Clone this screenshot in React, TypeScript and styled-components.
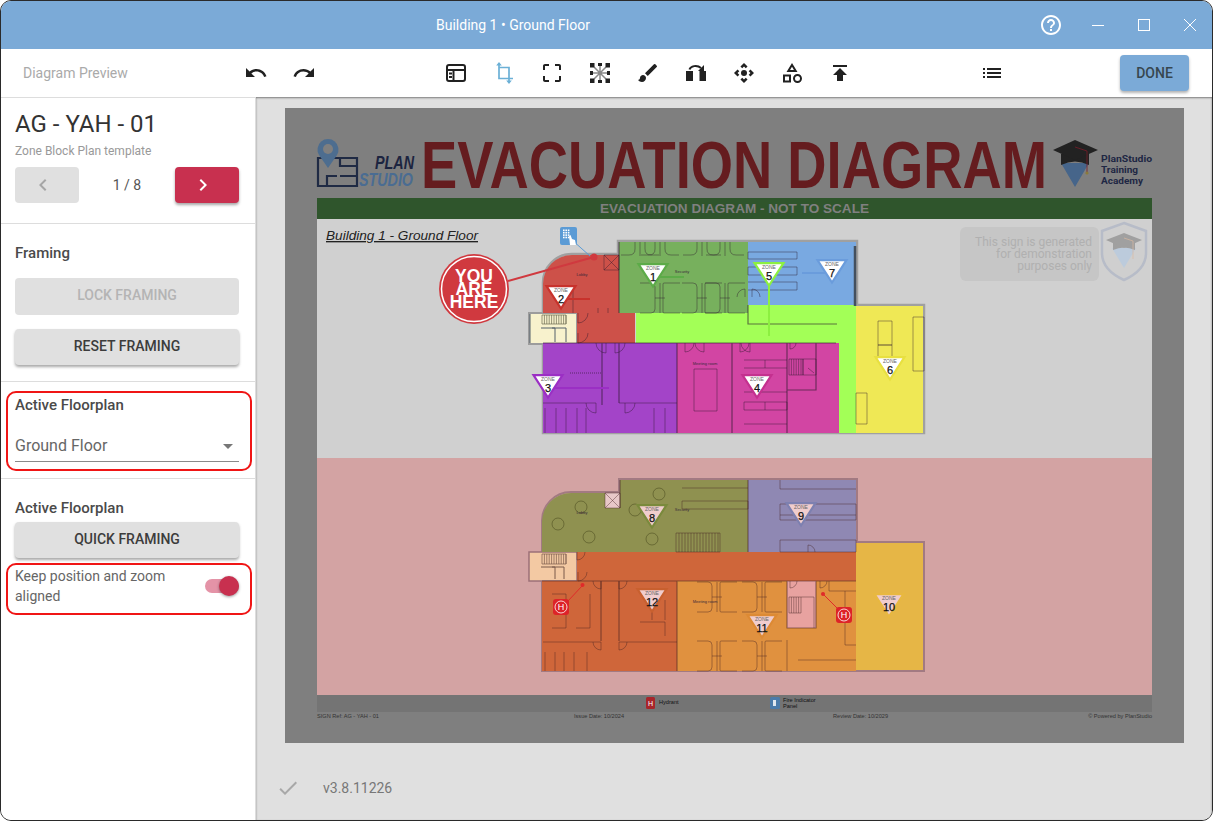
import React from "react";
import styled, { createGlobalStyle } from "styled-components";
import {
  MdUndo,
  MdRedo,
  MdCropFree,
  MdBrush,
  MdControlCamera,
  MdOutlineCategory,
  MdPublish,
  MdList,
  MdHelpOutline,
  MdCheck,
  MdChevronLeft,
  MdChevronRight,
} from "react-icons/md";

const GlobalStyle = createGlobalStyle`
  html, body { margin: 0; padding: 0; background: #fff; }
  * { box-sizing: border-box; }
  body { font-family: Roboto, "Liberation Sans", sans-serif; }
`;

const Win = styled.div`
  width: 1213px;
  height: 821px;
  display: flex;
  flex-direction: column;
  overflow: hidden;
  background: #fff;
  border: 1px solid #2a2a2a;
  border-radius: 11px;
`;

const TitleBar = styled.div`
  height: 48px;
  flex: none;
  display: flex;
  align-items: center;
  padding-left: 435px;
  background: #7baad7;
  color: #fff;
`;

const WinTitle = styled.div`
  font-size: 14px;
  flex: 1;
`;

const WinControl = styled.div`
  width: 46px;
  height: 48px;
  display: flex;
  align-items: center;
  justify-content: center;
  font-size: 24px;
`;

const ToolBar = styled.div`
  height: 48px;
  flex: none;
  display: flex;
  align-items: center;
  gap: 104px;
  background: #fff;
`;

const ToolLabel = styled.div`
  width: 127px;
  margin-left: 22px;
  margin-right: -22px;
  font-size: 14px;
  color: #aaa;
`;

const ToolGroup = styled.div`
  display: flex;
`;

const ToolBtn = styled.div`
  width: 48px;
  height: 48px;
  display: flex;
  align-items: center;
  justify-content: center;
  font-size: 24px;
  color: #212121;
`;

const DoneBtn = styled.div`
  width: 69px;
  height: 36px;
  display: flex;
  align-items: center;
  justify-content: center;
  border-radius: 4px;
  background: #7baad7;
  color: #37474f;
  font-size: 14px;
  font-weight: 500;
  box-shadow: 0 2px 3px rgba(0, 0, 0, 0.3);
`;

const Body = styled.div`
  flex: 1;
  display: flex;
  min-height: 0;
`;

const Sidebar = styled.div`
  width: 255px;
  flex: none;
  border-top: 1px solid #ddd;
  border-right: 1px solid #ddd;
  background: #fff;
`;

const Section = styled.div<{ $top: number; $bottom: number; $last?: boolean }>`
  position: relative;
  padding: ${(p) => p.$top}px 16px ${(p) => p.$bottom}px 14px;
  border-bottom: ${(p) => (p.$last ? "none" : "1px solid #ddd")};
`;

const DocName = styled.div`
  font-size: 24px;
  line-height: 28px;
  color: #333;
`;

const DocSub = styled.div`
  margin-top: 4px;
  font-size: 12px;
  line-height: 18px;
  color: #999;
`;

const Pager = styled.div`
  margin-top: 7px;
  display: flex;
  align-items: center;
  justify-content: space-between;
`;

const PageBtn = styled.div<{ $on?: boolean }>`
  width: 64px;
  height: 36px;
  display: flex;
  align-items: center;
  justify-content: center;
  padding-right: 8px;
  border-radius: 4px;
  font-size: 24px;
  background: ${(p) => (p.$on ? "#c8304f" : "#e0e0e0")};
  color: ${(p) => (p.$on ? "#fff" : "#a6a6a6")};
  box-shadow: ${(p) => (p.$on ? "0 2px 3px rgba(0,0,0,.35)" : "none")};
`;

const PageText = styled.div`
  font-size: 14px;
  color: #555;
`;

const Heading = styled.div`
  font-size: 15px;
  line-height: 20px;
  font-weight: 500;
  color: #4a4a4a;
`;

const ActionBtn = styled.div<{ $disabled?: boolean; $h?: number; $mt: number }>`
  height: ${(p) => p.$h ?? 36}px;
  margin-top: ${(p) => p.$mt}px;
  padding-bottom: ${(p) => (p.$disabled ? 3 : 2)}px;
  display: flex;
  align-items: center;
  justify-content: center;
  border-radius: 4px;
  background: #e0e0e0;
  font-size: 14px;
  font-weight: 500;
  color: ${(p) => (p.$disabled ? "#b4b4b4" : "#3c3c3c")};
  box-shadow: ${(p) => (p.$disabled ? "none" : "0 2px 3px rgba(0,0,0,.35)")};
`;

const SelectBox = styled.div`
  height: 31px;
  margin-top: 16px;
  display: flex;
  align-items: flex-start;
  justify-content: space-between;
  padding-right: 6px;
  border-bottom: 1px solid #8a8a8a;
  font-size: 16px;
  line-height: 30px;
  color: #666;
`;

const Caret = styled.div`
  margin-top: 13px;
  width: 0;
  height: 0;
  border-left: 5px solid transparent;
  border-right: 5px solid transparent;
  border-top: 5px solid #777;
`;

const ToggleRow = styled.div`
  position: relative;
  margin-top: 8px;
  display: flex;
  align-items: center;
  justify-content: space-between;
`;

const ToggleText = styled.div`
  width: 180px;
  font-size: 14px;
  line-height: 20px;
  color: #666;
`;

const Track = styled.div`
  position: relative;
  width: 34px;
  height: 14px;
  border-radius: 7px;
  background: #e493a7;
`;

const Thumb = styled.div`
  position: absolute;
  right: 0;
  top: -3px;
  width: 20px;
  height: 20px;
  border-radius: 50%;
  background: #c8304f;
  box-shadow: 0 1px 3px rgba(0, 0, 0, 0.4);
`;

const Callout = styled.div<{ $top: number; $left: number; $height: number }>`
  position: absolute;
  left: ${(p) => p.$left}px;
  top: ${(p) => p.$top}px;
  width: 246px;
  height: ${(p) => p.$height}px;
  border: 2.5px solid #f01515;
  border-radius: 10px;
  pointer-events: none;
`;

const Main = styled.div`
  flex: 1;
  display: flex;
  flex-direction: column;
  padding: 11px 0 0 29px;
  background: #e0e0e0;
  box-shadow: inset 0 1px 2px rgba(0, 0, 0, 0.45);
`;

const Sheet = styled.svg`
  display: block;
  width: 899px;
  height: 635px;
  flex: none;
  background: #7f7f7f;
`;

const Version = styled.div`
  margin-top: 33px;
  display: flex;
  align-items: center;
  gap: 23px;
  margin-left: -9px;
  font-size: 14px;
  color: #777;
`;

const CheckMark = styled.div`
  font-size: 24px;
  line-height: 0;
  color: #a8a8a8;
`;

const SheetTitle = styled.text`
  font-family: "Liberation Sans", sans-serif;
  font-weight: 700;
  font-size: 66px;
  fill: #651c1f;
`;

const BarText = styled.text`
  font-family: "Liberation Sans", sans-serif;
  font-weight: 700;
  font-size: 13.5px;
  fill: #808080;
`;

const FloorName = styled.text`
  font-family: "Liberation Sans", sans-serif;
  font-style: italic;
  font-size: 13.5px;
  fill: #222;
  text-decoration: underline;
`;

const LogoText = styled.text<{ $fill: string }>`
  font-family: "Liberation Sans", sans-serif;
  font-style: italic;
  font-weight: 700;
  font-size: 18px;
  fill: ${(p) => p.$fill};
`;

const AcademyText = styled.text`
  font-family: Roboto, sans-serif;
  font-weight: 700;
  font-size: 9px;
  fill: #1e2744;
`;

const NoticeText = styled.text`
  font-family: Roboto, sans-serif;
  font-size: 12px;
  fill: #b0b0b0;
  text-anchor: end;
`;

const HereText = styled.text`
  font-family: "Liberation Sans", sans-serif;
  font-weight: 700;
  font-size: 17.5px;
  fill: #fff;
  text-anchor: middle;
`;

const RoomText = styled.text`
  font-family: "Liberation Sans", sans-serif;
  font-size: 4px;
  fill: #3a2a3a;
  text-anchor: middle;
`;

const ZoneWord = styled.text`
  font-family: "Liberation Sans", sans-serif;
  font-size: 5px;
  fill: #666;
  text-anchor: middle;
`;

const ZoneNum = styled.text`
  font-family: "Liberation Sans", sans-serif;
  font-size: 11px;
  fill: #111;
  stroke: #111;
  stroke-width: 0.25px;
  text-anchor: middle;
`;

const FootText = styled.text`
  font-family: "Liberation Sans", sans-serif;
  font-size: 5.6px;
  fill: #333;
`;

const LegendText = styled.text`
  font-family: "Liberation Sans", sans-serif;
  font-size: 5.6px;
  fill: #111;
`;

const HydrantLetter = styled.text<{ $size: number }>`
  font-family: "Liberation Sans", sans-serif;
  font-size: ${(p) => p.$size}px;
  fill: #fff;
  text-anchor: middle;
`;

const LayoutIcon = () => (
  <svg width="24" height="24" viewBox="0 0 24 24" fill="none" stroke="currentColor" strokeWidth="2">
    <rect x="3" y="4" width="18" height="16" rx="2" />
    <path d="M3 9h18M9.5 9v11M5 12.5h3M5 16h3" />
  </svg>
);

const CropIcon = () => (
  <svg width="24" height="24" viewBox="0 0 24 24" fill="none" stroke="#6bb0d6" strokeWidth="1.7">
    <path d="M7 4v13.5h14M7 6.5h10V20" />
    <path d="M7 1l-2.8 3.5h5.6zM17 23l-2.8 -3.5h5.6z" fill="#6bb0d6" stroke="none" />
  </svg>
);

const ScatterIcon = () => (
  <svg width="24" height="24" viewBox="0 0 24 24">
    <path d="M6 6l12 12M18 6L6 18M12 5v14M5 12h14" stroke="#8a8a8a" strokeWidth="1.5" />
    <g fill="#212121">
      <rect x="2" y="2" width="4.5" height="4.5" />
      <rect x="10" y="2" width="4" height="3" />
      <rect x="17.5" y="2" width="4.5" height="4.5" />
      <rect x="2" y="10" width="3" height="4" />
      <rect x="19" y="10" width="3" height="4" />
      <rect x="2" y="17.5" width="4.5" height="4.5" />
      <rect x="10" y="19" width="4" height="3" />
      <rect x="17.5" y="17.5" width="4.5" height="4.5" />
    </g>
  </svg>
);

const DoorIcon = () => (
  <svg width="24" height="24" viewBox="0 0 24 24">
    <rect x="2" y="10" width="7" height="10" fill="#212121" />
    <rect x="15.5" y="10" width="6.5" height="10" fill="#212121" />
    <path d="M5.5 8.5C6.5 5 13 3.5 17 7" fill="none" stroke="#212121" strokeWidth="2" />
    <path d="M20 4v6h-6z" fill="#212121" />
  </svg>
);

const MinimizeIcon = () => (
  <svg width="14" height="14" viewBox="0 0 14 14" stroke="#fff" strokeWidth="1">
    <path d="M2 7.5h12" />
  </svg>
);

const MaximizeIcon = () => (
  <svg width="14" height="14" viewBox="0 0 14 14" fill="none" stroke="#fff" strokeWidth="1">
    <rect x="2.5" y="1.5" width="11" height="11" />
  </svg>
);

const CloseIcon = () => (
  <svg width="14" height="14" viewBox="0 0 14 14" stroke="#fff" strokeWidth="1">
    <path d="M2 1l12 12M14 1L2 13" />
  </svg>
);

const Zone = ({
  x,
  top,
  n,
  color,
  fill = "#fff",
  line,
}: {
  x: number;
  top: number;
  n: number;
  color: string;
  fill?: string;
  line?: string;
}) => (
  <g>
    {line && <path d={line} stroke={color} strokeWidth="2" fill="none" />}
    <path
      d={`M${x - 14.5} ${top + 1.2}H${x + 14.5}L${x} ${top + 23.5}Z`}
      fill={fill}
      stroke={color}
      strokeWidth="2.2"
    />
    <ZoneWord x={x} y={top + 7.2}>
      ZONE
    </ZoneWord>
    <ZoneNum x={x} y={top + 17.5}>
      {n}
    </ZoneNum>
  </g>
);

const Hydrant = ({ x, y, dot }: { x: number; y: number; dot: string }) => (
  <g>
    <path d={dot} stroke="#e02a2a" strokeWidth="1" fill="none" />
    <rect x={x - 8} y={y - 8} width="16" height="16" rx="3" fill="#dd2328" />
    <circle cx={x} cy={y} r="6" fill="none" stroke="#fff" strokeWidth="0.8" />
    <HydrantLetter x={x} y={y + 3.2} $size={9}>
      H
    </HydrantLetter>
  </g>
);

const PanelIcon = ({ x, y }: { x: number; y: number }) => (
  <g>
    <rect x={x} y={y} width="17" height="18" rx="2" fill="#5b9bd5" />
    {[0, 1, 2, 3].map((r) =>
      [0, 1, 2].map((c) => (
        <rect key={`${r}-${c}`} x={x + 3 + c * 2.4} y={y + 2.5 + r * 2.4} width="1.6" height="1.6" fill="#fff" />
      ))
    )}
    <path d={`M${x + 9} ${y + 9}l1.5 -1 1.5 4 3 1 1 5h-6z`} fill="#fff" />
  </g>
);

// bench block with a stem hanging from the wall
const deskTop = (x: number, y: number) =>
  `M${x} ${y}v14M${x - 5} ${y}v7q0 6 -6 6h-8M${x + 5} ${y}v7q0 6 6 6h8`;

// back to back desks, brackets open away from the stem
const desk = (x: number, bottom: number, h = 30) => {
  const top = bottom - h;
  return (
    `M${x} ${top}V${bottom}M${x - 5} ${top + h / 2}h10` +
    `M${x - 20} ${top}h11q4 0 4 4v${h - 8}q0 4 -4 4h-11` +
    `M${x + 20} ${top}h-16q-1 0 -1 1v${h - 2}q0 1 1 1h16`
  );
};

const hatch = (x: number, y: number, w: number, h: number, step = 2.4) => {
  let d = `M${x} ${y}h${w}v${h}h${-w}z`;
  for (let i = step; i < w; i += step) d += `M${x + i} ${y}v${h}`;
  return d;
};

const door = (x: number, y: number, r: number, dx = 1, dy = 1) =>
  `M${x} ${y}v${dy * r}A${r} ${r} 0 0 ${dx * dy > 0 ? 0 : 1} ${x + dx * r} ${y}`;

const GROUND_WALLS = [
  "M604 255h15v15h-15zM604 255l15 15M619 255l-15 15",
  "M573 286v27M562 286h11",
  deskTop(660, 242),
  deskTop(702, 242),
  deskTop(640, 242),
  deskTop(725, 242),
  desk(660, 313),
  desk(702, 313),
  desk(725, 313),
  "M748 252h49v7h-49zM748 267h49v8h-49zM748 282h49v8h-49",
  "M543 403h53M619 403h58",
  "M545 408v25M556 408v25M566 408v25M577 408v25M586 408v25M654 408v25M665 408v25",
  door(606, 343, 10, -1),
  door(615, 343, 10, 1),
  door(578, 313, 10, 1),
  door(578, 333, 10, 1),
  door(596, 403, 10, -1),
  door(625, 403, 10, 1),
  door(685, 343, 9, 1),
  door(704, 343, 9, -1),
  door(740, 343, 9, 1),
  door(750, 343, 9, -1),
  door(790, 343, 6, 1),
  door(745, 297, 8, -1, -1),
  door(752, 297, 8, 1, -1),
  "M694 369h23v42h-23z",
  "M744 360h43M765 360v8M744 368h43M744 392h43M744 402h43v8h-43zM765 402v8M744 424h43",
  hatch(789, 359, 14, 16),
  "M803 359h13v16h-13zM808 368l6 5",
  "M878 321h14v24h-14zM878 345h14v14h-14zM913 317h11v54h-11zM856 393h11v31h-11z",
  "M598 308v5M608 308v5",
];

const UPPER_WALLS = [
  "M605 493h15v15h-15zM605 493l15 15M620 493l-15 15",
  "M682 488h66M682 501h66v8h-66z",
  hatch(676, 533, 44, 19, 3),
  "M543 642h58M619 642h58",
  "M552 594h14v34h-14M590 594v34h-14",
  "M545 652v19M555 652v19M564 652v19M574 652v19M587 652v19",
  desk(717, 612),
  desk(717, 671),
  desk(762, 612),
  desk(762, 671),
  "M652 600v20M640 622h25v14M665 600v20",
  "M829 581v10h27M845 591v54h11M798 660h58",
  "M780 480v9h76M780 504h76v16h-76zM780 540h76v12h-76zM780 515h76",
  door(808, 552, 7, 1, -1),
  door(577, 552, 8, 1),
  door(578, 572, 9, 1),
  door(790, 581, 7, 1),
  door(820, 581, 7, 1),
  door(601, 581, 8, -1),
  door(619, 581, 8, 1),
  door(601, 642, 8, -1),
  door(619, 642, 8, 1),
  hatch(789, 597, 12, 16),
  "M801 597h13v31M787 640v31",
];

const CIRCLES = [
  [581, 507],
  [558, 524],
  [589, 537],
  [659, 494],
  [635, 510],
  [652, 539],
];

const EvacuationSheet = () => (
  <Sheet viewBox="285 108 899 635">
    {/* header */}
    <path d="M318 158h39v28h-39z M340 158v8h17M340 176h17M327 186v-10h10" fill="none" stroke="#1f2a44" strokeWidth="2.2" />
    <path d="M328 168l-9 -13a10.5 10.5 0 1 1 18 0z" fill="#4d6d8f" />
    <circle cx="328" cy="149" r="5" fill="#7f7f7f" />
    <LogoText x="375" y="169" $fill="#1c2440" textLength="39" lengthAdjust="spacingAndGlyphs">
      PLAN
    </LogoText>
    <LogoText x="359" y="186" $fill="#4a6c92" textLength="54" lengthAdjust="spacingAndGlyphs">
      STUDIO
    </LogoText>
    <SheetTitle x="421" y="188" textLength="626" lengthAdjust="spacingAndGlyphs">
      EVACUATION DIAGRAM
    </SheetTitle>
    <path d="M1061 163h28l-14 24z" fill="#46658a" />
    <path d="M1061 154h28v11q-14 -7 -28 0z" fill="#222" />
    <path d="M1075 140l23 10 -23 10 -22 -10z" fill="#222" />
    <path d="M1075 147l12 4v21" stroke="#7a1c2a" strokeWidth="0.8" fill="none" />
    <circle cx="1087" cy="173" r="1.6" fill="#8a7a3a" />
    <AcademyText x="1101" y="162" textLength="51" lengthAdjust="spacingAndGlyphs">
      PlanStudio
    </AcademyText>
    <AcademyText x="1101" y="172.8" textLength="37" lengthAdjust="spacingAndGlyphs">
      Training
    </AcademyText>
    <AcademyText x="1101" y="183.6" textLength="42" lengthAdjust="spacingAndGlyphs">
      Academy
    </AcademyText>

    {/* bands */}
    <rect x="317" y="198" width="835" height="21" fill="#2f552c" />
    <BarText x="600" y="213" textLength="269" lengthAdjust="spacingAndGlyphs">
      EVACUATION DIAGRAM - NOT TO SCALE
    </BarText>
    <rect x="317" y="219" width="835" height="239" fill="#d0d0d0" />
    <rect x="317" y="458" width="835" height="237" fill="#d3a3a3" />
    <rect x="317" y="695" width="835" height="17" fill="#747474" />

    <FloorName x="326" y="240" textLength="152" lengthAdjust="spacingAndGlyphs">
      Building 1 - Ground Floor
    </FloorName>

    {/* demonstration notice */}
    <rect x="960" y="227" width="139" height="54" rx="6" fill="#c6c6c6" />
    <NoticeText x="1092" y="246">
      This sign is generated
    </NoticeText>
    <NoticeText x="1092" y="258">
      for demonstration
    </NoticeText>
    <NoticeText x="1092" y="270">
      purposes only
    </NoticeText>
    <path d="M1124 223l22 8v22q0 17 -22 27q-22 -10 -22 -27v-22z" fill="#cfcfcf" stroke="#b7bcc8" strokeWidth="2.5" />
    <path d="M1112 248h24l-12 20z" fill="#bccbdc" />
    <path d="M1113 241h22v9q-11 -5 -22 0z" fill="#a0a0a0" />
    <path d="M1124 233l18 7 -18 8 -18 -8z" fill="#a0a0a0" />
    <path d="M1124 238l9 3v18" stroke="#d8b8a0" strokeWidth="0.7" fill="none" />

    {/* ground floor */}
    <path d="M543 284A29 29 0 0 1 572 254H618V241H857V305H924V433H543Z" fill="none" stroke="#a0a0a0" strokeWidth="2.5" />
    <rect x="529" y="313" width="48" height="31" fill="#f8f2cd" stroke="#9c9c9c" strokeWidth="2" />
    <path d="M619 242H748V313H619Z" fill="#77b05d" />
    <path d="M543 313V284A29 29 0 0 1 572 255H619V313H635V343H577V313Z" fill="#cd5149" />
    <path d="M636 313H748V305H856V433H839V343H636Z" fill="#a3ff57" />
    <rect x="748" y="242" width="108" height="63" fill="#79a9e1" />
    <rect x="856" y="306" width="67" height="127" fill="#efe855" />
    <rect x="677" y="343" width="162" height="90" fill="#d245a3" />
    <rect x="543" y="343" width="134" height="90" fill="#a344c8" />
    <path d={hatch(542, 315, 24, 9)} fill="none" stroke="#6b6a50" strokeWidth="0.7" />
    <path d="M541 328h14v14M552 328h14v14M530 314v29" fill="none" stroke="#55606a" strokeWidth="1" />
    <path d={GROUND_WALLS.join("")} fill="none" stroke="rgba(45,25,45,.42)" strokeWidth="1" />
    <path d="M602 343v62M619 343v60M677 343v90M732 343v90M787 343v90M787 390h29v-47M748 305v19H837M619 242v71M543 343H836" fill="none" stroke="rgba(45,25,45,.6)" strokeWidth="1.2" />
    <path d="M855 246v60" stroke="#44505e" strokeWidth="2.5" />
    <path d="M570 373h32" stroke="rgba(45,25,45,.6)" strokeDasharray="1 1" />
    <RoomText x="582" y="276">
      Lobby
    </RoomText>
    <RoomText x="682" y="273">
      Security
    </RoomText>
    <RoomText x="705" y="365">
      Meeting room
    </RoomText>

    <Zone x={653} top={263} n={1} color="#5cab48" line="M660 277H684" />
    <Zone x={561} top={285} n={2} color="#c8322c" line="M565 299H590" />
    <Zone x={548} top={374} n={3} color="#9b2fc4" line="M555 388H609" />
    <Zone x={757} top={374} n={4} color="#c4308f" />
    <Zone x={769} top={262} n={5} color="#8cf040" line="M769 280V336" />
    <Zone x={890} top={356} n={6} color="#e8e040" />
    <Zone x={832} top={259} n={7} color="#6a9cdc" line="M802 273H825" />

    {/* you are here */}
    <path d="M508 281L594 257" stroke="#d0393f" strokeWidth="2" />
    <circle cx="594" cy="257" r="3.5" fill="#d0393f" />
    <path d="M572 240L590 256" stroke="#5b9bd5" strokeWidth="1" />
    <PanelIcon x={560} y={227} />
    <circle cx="474" cy="289" r="35" fill="#d0393f" />
    <circle cx="474" cy="289" r="32.5" fill="none" stroke="#fff" strokeWidth="1.5" />
    <HereText x="474" y="281.5">
      YOU
    </HereText>
    <HereText x="474" y="294.5">
      ARE
    </HereText>
    <HereText x="474" y="308">
      HERE
    </HereText>

    {/* upper floor */}
    <path d="M542 522A29 29 0 0 1 571 492H619V479H857V542H924V671H542Z" fill="none" stroke="#a27a82" strokeWidth="2" />
    <rect x="529" y="552" width="48" height="29" fill="#f3c9a3" stroke="#9c7078" strokeWidth="1.5" />
    <path d="M542 552V522A29 29 0 0 1 571 493H620V480H748V552Z" fill="#8f9150" />
    <rect x="748" y="480" width="108" height="72" fill="#8f88b3" />
    <path d="M577 552H856V581H677V671H542V581H577Z" fill="#cf663a" />
    <rect x="677" y="581" width="179" height="90" fill="#e0913f" />
    <rect x="787" y="581" width="29" height="47" fill="#e8a2a0" />
    <rect x="856" y="543" width="67" height="127" fill="#e6b646" />
    <rect x="605" y="493" width="15" height="15" fill="#e8c8c8" />
    <path d={hatch(542, 554, 24, 10)} fill="none" stroke="#7a5a4a" strokeWidth="0.7" />
    <path d="M541 567h14v12M552 567h12v12" fill="none" stroke="#7a5a4a" strokeWidth="1" />
    <path d={UPPER_WALLS.join("")} fill="none" stroke="rgba(70,35,35,.42)" strokeWidth="1" />
    <path d="M601 581v60M619 581v60M677 581v90M787 581v47h29v-47M748 480v72M542 581h314M620 480v28" fill="none" stroke="rgba(70,35,35,.55)" strokeWidth="1.2" />
    <g fill="none" stroke="rgba(60,60,20,.45)" strokeWidth="1">
      {CIRCLES.map(([cx, cy]) => (
        <circle key={`${cx}-${cy}`} cx={cx} cy={cy} r="6" />
      ))}
    </g>
    <RoomText x="582" y="514">
      Lobby
    </RoomText>
    <RoomText x="682" y="511">
      Security
    </RoomText>
    <RoomText x="705" y="603">
      Meeting room
    </RoomText>

    <Zone x={652} top={504} n={8} color="#7a8a3c" fill="#f0cdcd" />
    <Zone x={801} top={502} n={9} color="#7d80b0" fill="#f0cdcd" />
    <Zone x={889} top={593} n={10} color="#e8b840" fill="#f0cdcd" />
    <Zone x={762} top={614} n={11} color="#dd8a34" fill="#f0cdcd" />
    <Zone x={652} top={588} n={12} color="#c8602f" fill="#f0cdcd" />
    <circle cx="582.5" cy="585" r="2" fill="#e02a2a" />
    <Hydrant x={561} y={607} dot="M582 586L568 601" />
    <circle cx="823" cy="594" r="2" fill="#e02a2a" />
    <Hydrant x={844} y={615} dot="M824 595L838 609" />

    {/* legend and footer */}
    <rect x="646" y="697" width="9" height="12" rx="1.5" fill="#a8252a" />
    <HydrantLetter x={650.5} y={706} $size={7}>
      H
    </HydrantLetter>
    <LegendText x="659" y="704">
      Hydrant
    </LegendText>
    <rect x="770" y="697" width="10" height="12" rx="1.5" fill="#4a7baa" />
    <path d="M773 700h3v6h-3z" fill="#dfe8f0" />
    <LegendText x="783" y="702">
      Fire Indicator
    </LegendText>
    <LegendText x="783" y="708">
      Panel
    </LegendText>
    <FootText x="317" y="718">
      SIGN Ref: AG - YAH - 01
    </FootText>
    <FootText x="574" y="718">
      Issue Date: 10/2024
    </FootText>
    <FootText x="833" y="718">
      Review Date: 10/2029
    </FootText>
    <FootText x="1152" y="718" textAnchor="end">
      © Powered by PlanStudio
    </FootText>
  </Sheet>
);

export default function App() {
  return (
    <>
      <GlobalStyle />
      <Win>
        <TitleBar>
          <WinTitle>Building 1 • Ground Floor</WinTitle>
          <WinControl>
            <MdHelpOutline />
          </WinControl>
          <WinControl>
            <MinimizeIcon />
          </WinControl>
          <WinControl>
            <MaximizeIcon />
          </WinControl>
          <WinControl>
            <CloseIcon />
          </WinControl>
        </TitleBar>
        <ToolBar>
          <ToolLabel>Diagram Preview</ToolLabel>
          <ToolGroup>
            <ToolBtn>
              <MdUndo />
            </ToolBtn>
            <ToolBtn>
              <MdRedo />
            </ToolBtn>
          </ToolGroup>
          <ToolGroup>
            <ToolBtn>
              <LayoutIcon />
            </ToolBtn>
            <ToolBtn>
              <CropIcon />
            </ToolBtn>
            <ToolBtn>
              <MdCropFree />
            </ToolBtn>
            <ToolBtn>
              <ScatterIcon />
            </ToolBtn>
            <ToolBtn>
              <MdBrush />
            </ToolBtn>
            <ToolBtn>
              <DoorIcon />
            </ToolBtn>
            <ToolBtn>
              <MdControlCamera />
            </ToolBtn>
            <ToolBtn>
              <MdOutlineCategory />
            </ToolBtn>
            <ToolBtn>
              <MdPublish />
            </ToolBtn>
          </ToolGroup>
          <ToolGroup>
            <ToolBtn>
              <MdList />
            </ToolBtn>
          </ToolGroup>
          <DoneBtn>DONE</DoneBtn>
        </ToolBar>
        <Body>
          <Sidebar>
            <Section $top={12} $bottom={20}>
              <DocName>AG - YAH - 01</DocName>
              <DocSub>Zone Block Plan template</DocSub>
              <Pager>
                <PageBtn>
                  <MdChevronLeft />
                </PageBtn>
                <PageText>1 / 8</PageText>
                <PageBtn $on>
                  <MdChevronRight />
                </PageBtn>
              </Pager>
            </Section>
            <Section $top={19} $bottom={16}>
              <Heading>Framing</Heading>
              <ActionBtn $disabled $h={37} $mt={15}>
                LOCK FRAMING
              </ActionBtn>
              <ActionBtn $mt={14}>RESET FRAMING</ActionBtn>
            </Section>
            <Section $top={13} $bottom={16}>
              <Heading>Active Floorplan</Heading>
              <SelectBox>
                Ground Floor
                <Caret />
              </SelectBox>
              <Callout $left={5} $top={9} $height={80} />
            </Section>
            <Section $top={19} $bottom={0} $last>
              <Heading>Active Floorplan</Heading>
              <ActionBtn $mt={4}>QUICK FRAMING</ActionBtn>
              <ToggleRow>
                <ToggleText>Keep position and zoom aligned</ToggleText>
                <Track>
                  <Thumb />
                </Track>
                <Callout $left={-9} $top={-3} $height={52} />
              </ToggleRow>
            </Section>
          </Sidebar>
          <Main>
            <EvacuationSheet />
            <Version>
              <CheckMark>
                <MdCheck />
              </CheckMark>
              v3.8.11226
            </Version>
          </Main>
        </Body>
      </Win>
    </>
  );
}
